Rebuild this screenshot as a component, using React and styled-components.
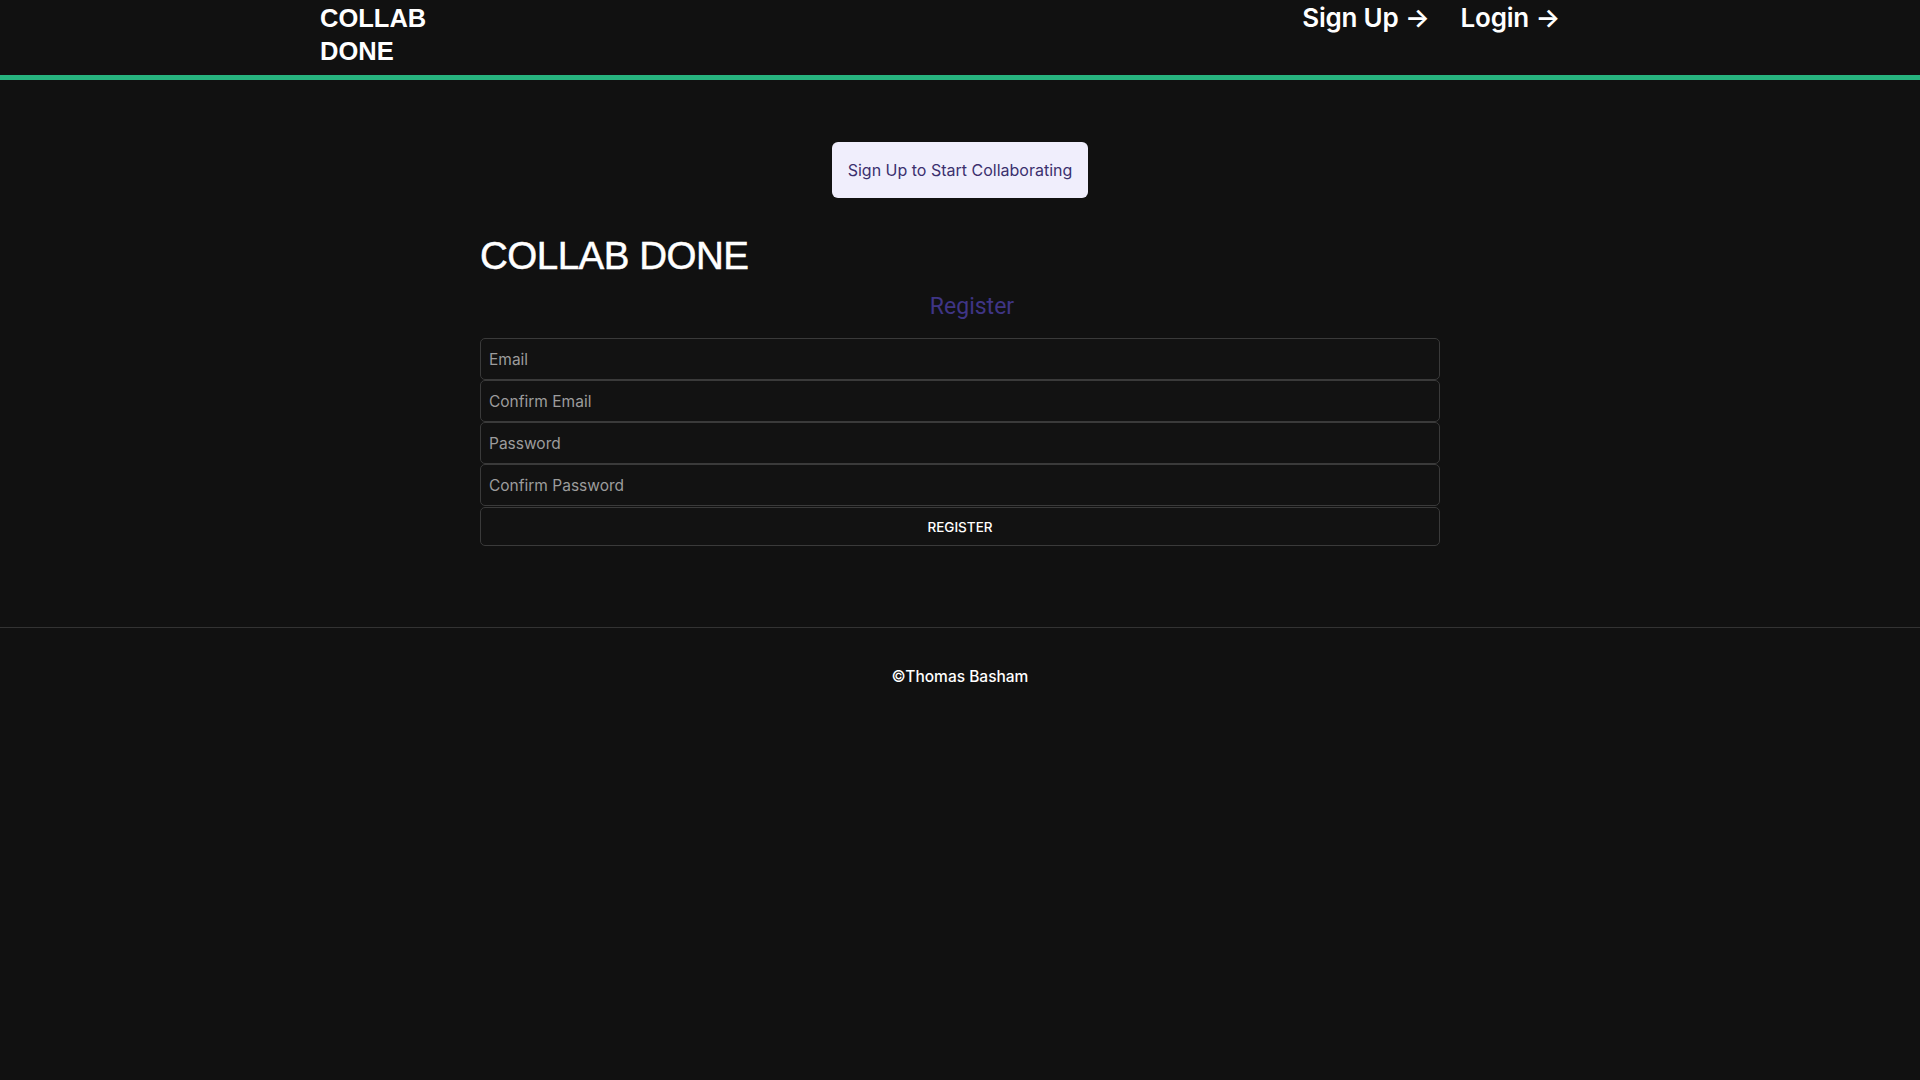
import React, { useState } from 'react';
import styled, { createGlobalStyle } from 'styled-components';

const GlobalStyle = createGlobalStyle`
  html, body {
    margin: 0;
    padding: 0;
    background: #111111;
    color: #ffffff;
    font-family: Inter, "Noto Sans", sans-serif;
  }
  * { box-sizing: border-box; }
`;

const Page = styled.div`
  min-height: 1080px;
  background: #111111;
`;

const Header = styled.header`
  border-bottom: 5px solid #27b47f;
`;

const HeaderInner = styled.div`
  width: 1280px;
  margin: 0 auto;
  height: 75px;
  padding-top: 2px;
  padding-right: 40px;
  display: flex;
  justify-content: space-between;
  align-items: flex-start;
`;

const Logo = styled.div`
  width: 120px;
  font-family: "Liberation Sans", Arial, sans-serif;
  font-weight: 700;
  font-size: 25.5px;
  line-height: 33px;
  color: #ffffff;
`;

const Nav = styled.nav`
  display: flex;
  gap: 31px;
`;

const NavLink = styled.a`
  font-family: Inter, sans-serif;
  font-weight: 600;
  font-size: 26px;
  line-height: 32px;
  color: #ffffff;
  text-decoration: none;
  letter-spacing: -0.2px;
  cursor: pointer;
`;

const Main = styled.main`
  display: flex;
  flex-direction: column;
  align-items: center;
  padding-top: 62px;
  padding-bottom: 81px;
  border-bottom: 1px solid #333333;
`;

const CtaButton = styled.button`
  height: 56px;
  padding: 0 16px;
  border: none;
  border-radius: 6px;
  background: #f0eefc;
  color: #3b306e;
  font-family: Inter, sans-serif;
  font-size: 16px;
  cursor: pointer;
`;

const FormWrap = styled.section`
  width: 960px;
  margin-top: 35px;
`;

const Title = styled.h1`
  margin: 0;
  font-family: "Liberation Sans", Arial, sans-serif;
  font-weight: 400;
  font-size: 38.5px;
  line-height: 46px;
  letter-spacing: -0.5px;
  color: #ffffff;
  -webkit-text-stroke: 0.5px #ffffff;
`;

const SubTitle = styled.h2`
  margin: 14px 0 17px;
  padding-left: 24px;
  text-align: center;
  font-family: Roboto, sans-serif;
  font-weight: 400;
  font-size: 23px;
  line-height: 28px;
  color: #3f3585;
`;

const Form = styled.form`
  display: flex;
  flex-direction: column;
`;

const Input = styled.input`
  height: 42px;
  width: 100%;
  padding: 0 8px;
  background: #121212;
  border: 1px solid #3a3a3a;
  border-radius: 5px;
  color: #ffffff;
  font-family: Inter, sans-serif;
  font-size: 15.5px;
  outline: none;
  &::placeholder {
    color: #9c9c9c;
  }
`;

const SubmitButton = styled.button`
  height: 39px;
  width: 100%;
  margin-top: 1px;
  background: #121212;
  border: 1px solid #3a3a3a;
  border-radius: 5px;
  color: #ffffff;
  font-family: Inter, sans-serif;
  font-size: 13.5px;
  font-weight: 500;
  text-transform: uppercase;
  cursor: pointer;
`;

const Footer = styled.footer`
  padding-top: 39px;
  text-align: center;
  font-family: Inter, sans-serif;
  font-weight: 500;
  font-size: 15.5px;
  line-height: 20px;
  color: #ffffff;
`;

const fields = [
  { name: 'email', type: 'email', placeholder: 'Email' },
  { name: 'confirmEmail', type: 'email', placeholder: 'Confirm Email' },
  { name: 'password', type: 'password', placeholder: 'Password' },
  { name: 'confirmPassword', type: 'password', placeholder: 'Confirm Password' },
];

const App = () => {
  const [values, setValues] = useState({});

  const handleChange = (e) => {
    setValues({ ...values, [e.target.name]: e.target.value });
  };

  return (
    <Page>
      <GlobalStyle />
      <Header>
        <HeaderInner>
          <Logo>COLLAB DONE</Logo>
          <Nav>
            <NavLink>Sign Up →</NavLink>
            <NavLink>Login →</NavLink>
          </Nav>
        </HeaderInner>
      </Header>
      <Main>
        <CtaButton type="button">Sign Up to Start Collaborating</CtaButton>
        <FormWrap>
          <Title>COLLAB DONE</Title>
          <SubTitle>Register</SubTitle>
          <Form onSubmit={(e) => e.preventDefault()}>
            {fields.map((f) => (
              <Input
                key={f.name}
                name={f.name}
                type={f.type}
                placeholder={f.placeholder}
                value={values[f.name] || ''}
                onChange={handleChange}
              />
            ))}
            <SubmitButton type="submit">Register</SubmitButton>
          </Form>
        </FormWrap>
      </Main>
      <Footer>©Thomas Basham</Footer>
    </Page>
  );
};

export default App;
